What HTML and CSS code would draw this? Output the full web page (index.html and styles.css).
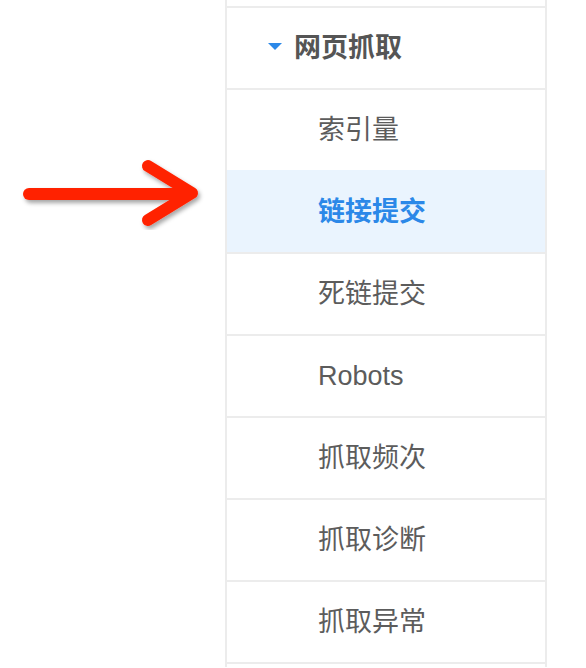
FILE: index.html
```html
<!DOCTYPE html>
<html lang="zh-CN">
<head>
<meta charset="utf-8">
<title>网页抓取</title>
<link rel="stylesheet" href="styles.css">
</head>
<body>
<div class="stage">
  <svg class="pointer" width="210" height="80" viewBox="0 0 210 80" aria-hidden="true">
    <defs>
      <filter id="sh" x="-10%" y="-20%" width="130%" height="160%">
        <feDropShadow dx="2" dy="3" stdDeviation="2" flood-color="#000" flood-opacity="0.35"/>
      </filter>
    </defs>
    <g filter="url(#sh)" fill="none" stroke="#ff2200" stroke-width="12" stroke-linecap="round" stroke-linejoin="round">
      <line x1="29" y1="44" x2="182" y2="44"/>
      <polyline points="148,16 192,43 148,70"/>
    </g>
  </svg>
  <ul class="menu">
    <li class="row filler"></li>
    <li class="row group"><span class="caret"></span><span class="group-title">网页抓取</span></li>
    <li class="row item">索引量</li>
    <li class="row item active">链接提交</li>
    <li class="row item">死链提交</li>
    <li class="row item latin">Robots</li>
    <li class="row item">抓取频次</li>
    <li class="row item">抓取诊断</li>
    <li class="row item">抓取异常</li>
    <li class="row item tail"></li>
  </ul>
</div>
</body>
</html>
```
FILE: styles.css
```css
html, body {
  margin: 0;
  padding: 0;
  background: #ffffff;
  overflow: hidden;
}
body {
  font-family: "Liberation Sans", "Noto Sans CJK SC", sans-serif;
  color: #5c5c5c;
}
.stage {
  position: relative;
  width: 586px;
  height: 668px;
  overflow: hidden;
}
.pointer {
  position: absolute;
  left: 0;
  top: 150px;
}
.menu {
  list-style: none;
  margin: 0 0 0 225px;
  padding: 0;
  width: 318px;
  border-left: 2px solid #ececec;
  border-right: 2px solid #ececec;
}
.row {
  box-sizing: content-box;
  height: 80px;
  border-top: 2px solid #ececec;
  display: flex;
  align-items: center;
  font-size: 27px;
  line-height: 1;
  padding-left: 91px;
}
.row.filler {
  height: 6px;
  border-top: 0;
}
.row.tail {
  height: 3px;
}
.row.group {
  padding-left: 41px;
  font-weight: bold;
  color: #555555;
}
.caret {
  width: 0;
  height: 0;
  border-left: 7px solid transparent;
  border-right: 7px solid transparent;
  border-top: 7px solid #2b88e8;
  margin-right: 12px;
  margin-top: -4px;
}
.group-title {
  font-size: 27px;
}
.row.active {
  background: #eaf4fe;
  border-top-color: #eaf4fe;
  color: #2b88e8;
  font-weight: bold;
}
.row.latin {
  font-size: 27px;
}
```
